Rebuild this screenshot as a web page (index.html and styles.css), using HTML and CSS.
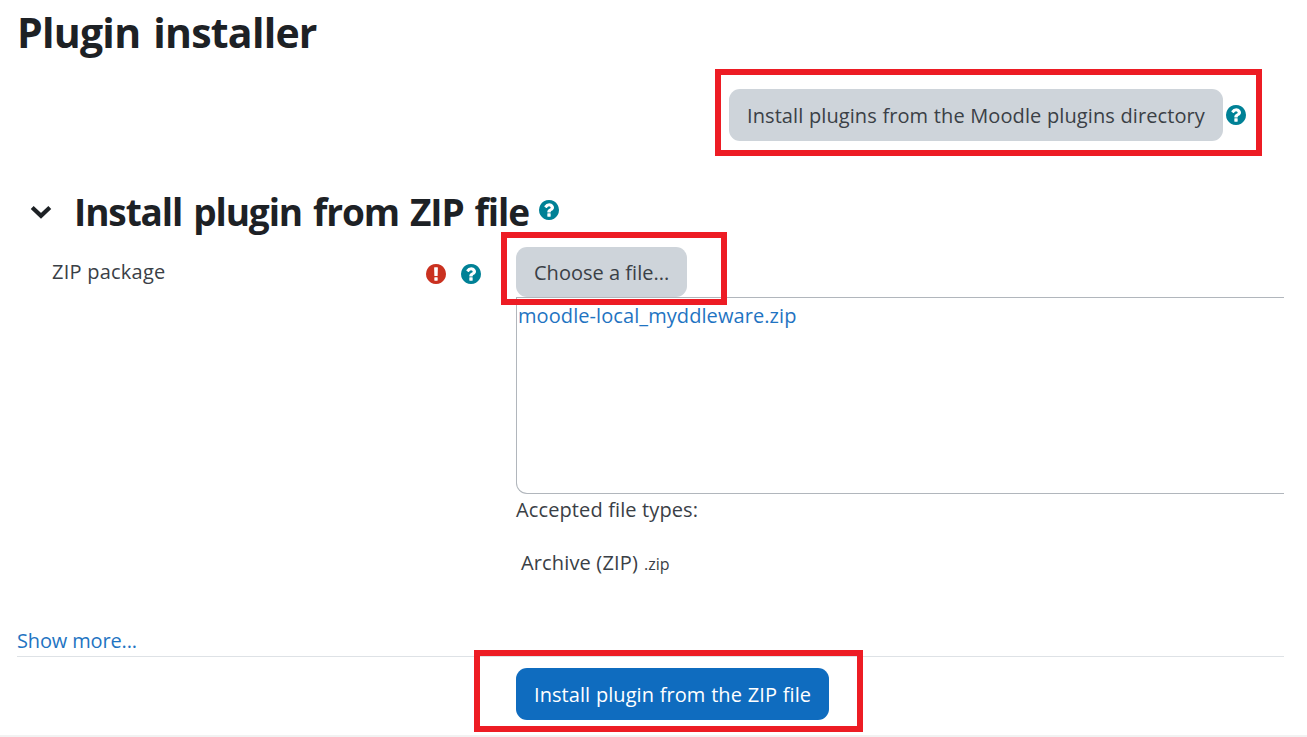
FILE: index.html
```html
<!DOCTYPE html>
<html lang="en">
<head>
<meta charset="utf-8">
<title>Plugin installer</title>
<link rel="stylesheet" href="styles.css">
</head>
<body>
<svg class="sprite" aria-hidden="true">
  <symbol id="question" viewBox="128 128 1536 1536"><path d="M1024 1376v-192q0-14-9-23t-23-9h-192q-14 0-23 9t-9 23v192q0 14 9 23t23 9h192q14 0 23-9t9-23zM1280 704q0-88-55.5-163t-138.5-116-170-41q-243 0-371 213-15 24 8 42l132 100q7 6 19 6 16 0 25-12 53-68 86-92 34-24 86-24 48 0 85.5 26t37.500 59q0 38-20 61t-68 45q-63 28-115.500 86.500t-52.500 125.500v36q0 14 9 23t23 9h192q14 0 23-9t9-23q0-19 21.500-49.500t54.500-49.500q32-18 49-28.500t46-35 44.500-48 28-60.500 12.500-81zM1664 896q0 209-103 385.500t-279.500 279.500-385.500 103-385.500-103-279.500-279.500-103-385.500 103-385.500 279.500-279.500 385.500-103 385.500 103 279.500 279.500 103 385.500z"/></symbol>
  <symbol id="required" viewBox="128 128 1536 1536"><path d="M896 128q209 0 385.500 103t279.500 279.500 103 385.500-103 385.500-279.500 279.500-385.500 103-385.500-103-279.500-279.500-103-385.500 103-385.500 279.500-279.500 385.500-103zm128 1247v-190q0-14-9-23.500t-22-9.500h-192q-13 0-23 10t-10 23v190q0 13 10 23t23 10h192q13 0 22-9.500t9-23.500zm-2-344l18-621q0-12-10-18-10-8-24-8h-220q-14 0-24 8-10 6-10 18l17 621q0 10 10 17.500t24 7.500h185q14 0 23.500-7.500t10.500-17.500z"/></symbol>
</svg>
<main class="page">
  <h1 class="title">Plugin installer</h1>
  <div class="directory">
    <div class="marked marked-directory">
      <button class="btn btn-secondary btn-directory">Install plugins from the Moodle plugins directory</button>
      <svg class="icon help"><use href="#question"/></svg>
    </div>
  </div>
  <div class="section-head">
    <svg class="chevron" viewBox="0 0 22 14"><path d="M2.200 2.500 11 10.800 19.800 2.500"/></svg>
    <h2 class="section-title">Install plugin from ZIP file</h2>
    <svg class="icon help"><use href="#question"/></svg>
  </div>
  <div class="form-row">
    <div class="label-col">
      <span class="label">ZIP package</span>
      <span class="label-icons">
        <svg class="icon required"><use href="#required"/></svg>
        <svg class="icon help"><use href="#question"/></svg>
      </span>
    </div>
    <div class="field-col">
      <div class="marked marked-choose"><button class="btn btn-secondary btn-choose">Choose a file...</button></div>
      <div class="dropzone"><a class="link file-link">moodle-local_myddleware.zip</a></div>
      <p class="accepted">Accepted file types:</p>
      <p class="types"><span class="type-name">Archive (ZIP)</span><small class="ext">.zip</small></p>
    </div>
  </div>
  <div class="more"><a class="link more-link">Show more...</a></div>
  <div class="actions">
    <div class="marked marked-submit"><button class="btn btn-primary">Install plugin from the ZIP file</button></div>
  </div>
</main>
<div class="bottom-rule"></div>
</body>
</html>
```
FILE: styles.css
```css
* { box-sizing: border-box; }
body {
  margin: 0;
  height: 737px;
  display: flex;
  flex-direction: column;
  overflow: hidden;
  background: #fff;
  color: #3a4046;
  font-family: "Open Sans", "Noto Sans", sans-serif;
  font-size: 20px;
  line-height: 30px;
}
h1, h2, p { margin: 0; }
.sprite { position: absolute; width: 0; height: 0; }
.page { height: 735px; padding: 0 23px 0 17px; display: flex; flex-direction: column; }
.bottom-rule { height: 2px; background: #f2f2f2; }
.title, .section-title { color: #1d2125; font-weight: 700; white-space: nowrap; }
.title { height: 89px; padding-top: 7px; font-size: 41px; line-height: 50px; letter-spacing: -0.750px; word-spacing: 3px; }
.directory { height: 101px; display: flex; justify-content: flex-end; padding-right: 38px; }
.marked { position: relative; display: flex; align-items: center; width: max-content; }
.marked::after { content: ""; position: absolute; border: 6px solid #ed1c24; pointer-events: none; }
.marked-directory { height: 52px; gap: 3px; }
.marked-directory::after { inset: -20px -16px -15px -14px; }
.marked-choose::after { inset: -15px -40px -8px -15px; }
.marked-submit::after { inset: -18px -34px -12px -42px; }
.btn {
  height: 52px;
  padding: 0 0 0 18px;
  border: 0;
  border-radius: 11px;
  font: inherit;
  text-align: left;
  white-space: nowrap;
}
.btn-secondary { background: #ced4da; color: #3a4046; }
.btn-directory { width: 494px; padding-top: 1px; letter-spacing: 0.090px; word-spacing: 0.300px; }
.btn-choose { width: 171px; height: 50px; padding-top: 1px; letter-spacing: 0.020px; }
.btn-primary { width: 313px; padding-top: 1px; background: #0f6cbf; color: #fff; letter-spacing: 0.060px; word-spacing: 0.500px; }
.icon { width: 20px; height: 20px; flex: none; }
.help { fill: #008196; }
.required { fill: #ca3120; }
.section-head { height: 57px; display: flex; padding-left: 13px; }
.chevron { width: 22px; height: 14px; margin: 15px 22px 0 0; fill: none; stroke: #1d2125; stroke-width: 4.200; }
.section-title { width: 465px; padding-top: 1px; font-size: 37px; line-height: 42px; letter-spacing: -1.110px; word-spacing: 2.500px; }
.section-head .icon { margin-top: 10px; }
.form-row { height: 378px; display: grid; grid-template-columns: 499px 1fr; }
.label-col { display: flex; justify-content: space-between; padding: 10px 35px 0 35px; }
.label { letter-spacing: 0.240px; }
.label-icons { display: flex; gap: 15px; padding-top: 7px; }
.dropzone {
  height: 197px;
  border: 1.500px solid #b1b6bc;
  border-right: 0;
  border-radius: 0 0 0 11px;
  padding: 3px 0 0 1px;
}
.link { color: #1f74c2; }
.file-link { letter-spacing: 0.080px; }
.more-link { letter-spacing: -0.150px; }
.accepted { height: 54px; padding-top: 1px; letter-spacing: 0.120px; }
.types { display: flex; align-items: baseline; gap: 6px; padding-left: 5px; }
.type-name { letter-spacing: 0.150px; }
.ext { font-size: 16px; }
.more { height: 32px; padding-top: 1px; border-bottom: 1px solid #dee2e6; }
.actions { padding: 11px 0 0 499px; }
```
